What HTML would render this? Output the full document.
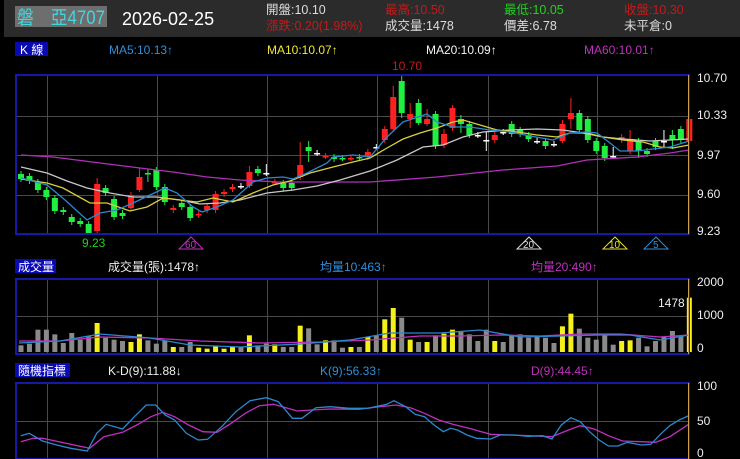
<!DOCTYPE html>
<html><head><meta charset="utf-8">
<style>
html,body{margin:0;padding:0;background:#000;width:740px;height:459px;overflow:hidden}
body{position:relative;font-family:"Liberation Sans","Noto Sans CJK TC",sans-serif;}
svg{position:absolute;left:0;top:0}
</style></head>
<body>
<svg id="s" width="740" height="459" xmlns="http://www.w3.org/2000/svg" font-family="Liberation Sans, Noto Sans CJK TC, sans-serif">
<rect x="4" y="0" width="736" height="37" fill="#2b2b2b"/>
<rect x="15" y="6" width="92" height="21" fill="#6e6e6e"/>
<text x="17" y="24" fill="#3fd8e0" font-size="19" textLength="88" lengthAdjust="spacingAndGlyphs">磐　亞4707</text>
<text x="122" y="25" fill="#fff" font-size="18">2026-02-25</text>
<g font-size="12.5">
<text x="266" y="14" fill="#ddd">開盤:10.10</text>
<text x="266" y="30" fill="#c81818">漲跌:0.20(1.98%)</text>
<text x="385" y="14" fill="#c81818">最高:10.50</text>
<text x="385" y="30" fill="#ddd">成交量:1478</text>
<text x="504" y="14" fill="#20d020">最低:10.05</text>
<text x="504" y="30" fill="#ddd">價差:6.78</text>
<text x="624" y="14" fill="#c81818">收盤:10.30</text>
<text x="624" y="30" fill="#ddd">未平倉:0</text>
</g>
<g font-size="12">
<rect x="15" y="42" width="33" height="14" fill="#0a0ab4"/>
<text x="20" y="54" fill="#fff">K 線</text>
<text x="109" y="54" fill="#2f8fdc">MA5:10.13↑</text>
<text x="267" y="54" fill="#f0e830">MA10:10.07↑</text>
<text x="426" y="54" fill="#f4f4f4">MA20:10.09↑</text>
<text x="584" y="54" fill="#c030c0">MA60:10.01↑</text>

<rect x="15" y="259" width="41" height="14" fill="#0a0ab4"/>
<text x="18" y="271" fill="#fff">成交量</text>
<text x="108" y="271" fill="#eee">成交量(張):1478↑</text>
<text x="320" y="271" fill="#2f8fdc">均量10:463↑</text>
<text x="531" y="271" fill="#c030c0">均量20:490↑</text>

<rect x="15" y="363" width="55" height="14" fill="#0a0ab4"/>
<text x="18" y="375" fill="#fff">隨機指標</text>
<text x="108" y="375" fill="#eee">K-D(9):11.88↓</text>
<text x="320" y="375" fill="#2f8fdc">K(9):56.33↑</text>
<text x="531" y="375" fill="#c030c0">D(9):44.45↑</text>

<g fill="#eee">
<text x="697" y="82">10.70</text><text x="697" y="119">10.33</text><text x="697" y="159">9.97</text><text x="697" y="198">9.60</text><text x="697" y="235">9.23</text>
<text x="697" y="286">2000</text><text x="697" y="319">1000</text><text x="697" y="352">0</text>
<text x="658" y="307">1478</text>
<text x="697" y="390">100</text><text x="697" y="425">50</text><text x="697" y="457">0</text>
</g>
<text x="392" y="70" fill="#c81818">10.70</text>
<text x="82" y="247" fill="#20d020">9.23</text>
</g>
<g id="grid" stroke="#4a4a4a" stroke-width="1"></g>
<g id="plot"></g>
<g fill="none" stroke="#1818a8" stroke-width="2">
<rect x="16" y="75" width="673" height="159"/>
<rect x="16" y="279" width="673" height="75"/>
<rect x="16" y="383" width="673" height="76"/>
</g>
<g stroke="#c8a048" stroke-width="1"><line x1="688.5" y1="75" x2="688.5" y2="234"/><line x1="688.5" y1="279" x2="688.5" y2="354"/><line x1="688.5" y1="383" x2="688.5" y2="459"/></g>
<g font-size="10" stroke-width="1" fill="none">
<path d="M191 237 L179 249 L203 249 Z" stroke="#c030c0"/><text x="185" y="248" fill="#c030c0" stroke="none">60</text>
<path d="M529 237 L517 249 L541 249 Z" stroke="#ddd"/><text x="523" y="248" fill="#ddd" stroke="none">20</text>
<path d="M615 237 L603 249 L627 249 Z" stroke="#e0e030"/><text x="609" y="248" fill="#e0e030" stroke="none">10</text>
<path d="M656 237 L644 249 L668 249 Z" stroke="#2f8fdc"/><text x="653" y="248" fill="#2f8fdc" stroke="none">5</text>
</g>
</svg>
<script>
var NS="http://www.w3.org/2000/svg",g=document.getElementById('grid'),p=document.getElementById('plot');
function el(par,t,a){var e=document.createElementNS(NS,t);for(var k in a)e.setAttribute(k,a[k]);par.appendChild(e);return e;}
[47,157,267,377,488,597].forEach(function(x){[[75,234],[279,354],[383,459]].forEach(function(r){el(g,'line',{x1:x+.5,x2:x+.5,y1:r[0],y2:r[1]});});});
[116,155,195,316,421].forEach(function(y){el(g,'line',{x1:16,x2:689,y1:y+.5,y2:y+.5});});
var C=[[174,179,'g'],[176,181,'g'],[182,190,'g'],[190,197,'g'],[198,211,'g'],[210,212,'g'],[217,222,'g'],[221,224,'g'],[224,234,'g'],[184,231,'r'],
[188,193,'g'],[199,217,'g'],[213,216,'g'],[195,208,'r'],[177,190,'r'],[173,174,'g'],[170,187,'g'],[187,202,'g'],[208,210,'r'],[203,207,'g'],
[207,218,'g'],[214,215,'r'],[206,210,'r'],[194,210,'r'],[192,194,'r'],[187,189,'r'],[186,186,'w'],[172,186,'r'],[169,173,'g'],[173,173,'w'],
[182,182,'r'],[183,188,'g'],[183,188,'g'],[165,177,'r'],[147,151,'g'],[153,153,'w'],[156,156,'r'],[157,159,'g'],[158,158,'g'],[158,158,'r'],
[157,157,'g'],[152,157,'r'],[147,147,'w'],[129,140,'r'],[97,129,'r'],[81,113,'g'],[114,119,'r'],[103,123,'g'],[119,124,'r'],[114,146,'g'],
[134,145,'r'],[108,128,'r'],[119,124,'g'],[124,135,'g'],[135,135,'w'],[140,140,'w'],[135,140,'r'],[132,132,'w'],[124,134,'g'],[130,134,'g'],
[135,139,'g'],[141,141,'w'],[141,146,'g'],[144,144,'w'],[124,141,'r'],[113,119,'r'],[113,130,'g'],[119,140,'g'],[141,151,'g'],[146,158,'g'],
[156,156,'w'],[137,140,'r'],[140,151,'r'],[141,151,'g'],[151,154,'g'],[141,147,'g'],[141,141,'w'],[135,140,'g'],[129,140,'g'],[119,141,'r']];
var W={9:[178,234],14:[168,192],15:[169,182],27:[166,188],29:[164,176],33:[142,180],34:[141,162],44:[86,131],45:[76,118],46:[103,128],47:[99,125],48:[109,126],50:[129,148],52:[115,133],55:[131,151],64:[120,143],65:[98,129],70:[147,159],72:[130,154],73:[138,158],76:[130,148],77:[130,149]};
var col={r:'#ff2020',g:'#20ee40',w:'#ffffff'};
C.forEach(function(c,i){var x=21+8.46*i,w=W[i]||[c[0]-3,c[1]+3];
el(p,'line',{x1:x,x2:x,y1:w[0],y2:Math.min(w[1],233),stroke:col[c[2]],'stroke-width':1});
var h=Math.max(c[1]-c[0],1.5);el(p,'rect',{x:x-3,y:c[0],width:6,height:h,fill:col[c[2]]});});
function pl(pts,color,fx,fy){var s=pts.map(function(q){return (fx?fx(q[0]):q[0])+','+(fy?fy(q[1]):q[1]);}).join(' ');el(p,'polyline',{points:s,fill:'none',stroke:color,'stroke-width':1.3});}
pl([[21,155],[53,157],[100,163],[140,168],[173,172],[207,177],[240,180],[280,182],[370,182],[437,177],[503,170],[557,166],[587,160],[637,157],[670,153],[689,150]],'#b030b8');
pl([[21,167],[47,173],[67,181],[87,188],[110,193],[133,197],[157,197],[180,200],[200,204],[220,203],[240,200],[267,193],[293,190],[317,186],[340,180],[370,171],[397,160],[423,147],[443,145],[463,137],[483,132],[510,130],[537,129],[563,130],[583,133],[603,137],[623,139],[650,141],[670,140],[689,139]],'#c8c8c8');
pl([[21,179],[47,183],[63,188],[90,203],[107,203],[130,211],[147,207],[163,198],[180,200],[197,202],[213,198],[233,202],[253,193],[273,185],[290,181],[310,173],[333,167],[353,162],[370,158],[387,148],[403,139],[420,133],[437,128],[453,122],[463,120],[480,125],[497,130],[517,132],[537,135],[557,137],[570,133],[587,133],[603,137],[623,140],[643,142],[660,147],[673,148],[689,145]],'#d8d040');
pl([[21,178],[47,185],[65,200],[87,220],[100,213],[117,210],[133,203],[150,195],[165,188],[177,193],[193,207],[202,212],[217,207],[233,200],[253,182],[267,178],[283,177],[293,179],[307,173],[327,163],[333,157],[353,155],[370,157],[387,137],[403,122],[427,114],[437,122],[453,127],[470,127],[490,130],[510,132],[530,136],[553,140],[570,133],[587,132],[597,133],[610,143],[620,151],[637,151],[653,149],[670,147],[689,141]],'#2a88d0');
var V=[285,280,238,238,252,278,248,268,258,218,262,268,272,275,252,270,280,272,290,290,275,292,295,288,295,290,290,255,285,280,282,290,290,226,234,282,270,270,292,290,290,260,256,207,173,202,268,275,275,255,250,238,243,252,272,238,272,275,255,252,262,258,262,278,228,190,235,262,268,250,283,272,270,262,288,272,260,242,258,142];
V.forEach(function(v,i){var x=21+8.46*i,h=(305-v)/3,c=C[i][2]=='r'?'#f4f018':'#8a8a8a';el(p,'rect',{x:x-2.5,y:352-h,width:5,height:h,fill:c});});
pl([[19,341],[60,341],[100,337],[150,338],[200,341],[260,343],[320,342],[370,340],[420,336],[460,336],[500,335],[540,336],[580,334],[620,334],[660,337],[689,335]],'#c030c0');
pl([[19,343],[60,341],[100,334],[150,338],[190,345],[240,347],[300,344],[350,340],[390,333],[440,333],[480,330],[520,337],[560,336],[600,335],[630,335],[660,340],[689,335]],'#2a88d0');
var K=[[44,242],[62,235],[90,258],[120,270],[150,280],[185,288],[205,235],[225,208],[260,222],[285,185],[310,150],[330,150],[350,180],[370,195],[395,235],[420,255],[440,253],[470,215],[500,170],[530,137],[565,128],[590,140],[620,190],[640,190],[670,158],[700,155],[740,160],[780,160],[820,148],[835,137],[860,155],[880,178],[900,185],[920,210],[940,230],[955,220],[970,225],[990,240],[1010,250],[1040,252],[1060,240],[1090,240],[1120,244],[1150,242],[1170,252],[1190,210],[1210,188],[1230,200],[1250,230],[1270,255],[1290,273],[1310,273],[1330,262],[1360,270],[1380,268],[1400,238],[1420,212],[1440,195],[1460,182]];
var D=[[44,260],[70,250],[90,250],[130,262],[190,280],[220,245],[260,232],[290,210],[320,185],[345,172],[370,185],[400,210],[430,230],[460,232],[490,205],[520,175],[550,152],[580,148],[610,160],[630,168],[660,165],[700,162],[760,163],[800,156],[840,150],[870,158],[900,175],[930,195],[960,208],[1000,222],[1040,238],[1080,240],[1120,242],[1170,245],[1200,228],[1230,212],[1260,222],[1290,242],[1320,258],[1360,260],[1390,262],[1420,245],[1460,208]];
var fx=function(x){return (x/2.12).toFixed(1)},fy=function(y){return (355+y/3).toFixed(1)};
pl(D,'#c030c0',fx,fy);pl(K,'#2a88d0',fx,fy);
</script>
</body></html>
